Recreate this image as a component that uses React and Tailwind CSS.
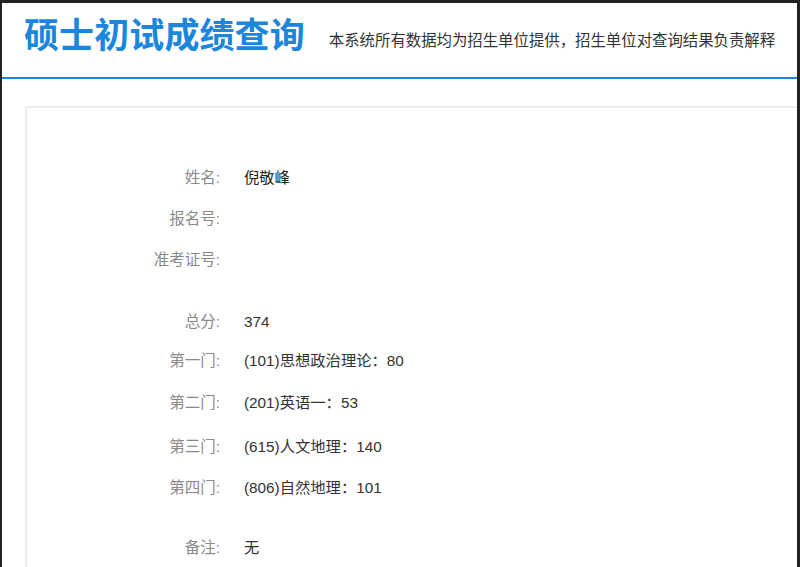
import React from 'react';

const rows = [
  { label: '姓名:', value: '倪敬峰', mt: 'mt-[60px]', strong: true },
  { label: '报名号:', value: '', mt: 'mt-[21px]' },
  { label: '准考证号:', value: '', mt: 'mt-[21px]' },
  { label: '总分:', value: '374', mt: 'mt-[42px]' },
  { label: '第一门:', value: '(101)思想政治理论：80', mt: 'mt-[19px]' },
  { label: '第二门:', value: '(201)英语一：53', mt: 'mt-[22px]' },
  { label: '第三门:', value: '(615)人文地理：140', mt: 'mt-[24px]' },
  { label: '第四门:', value: '(806)自然地理：101', mt: 'mt-[21px]' },
  { label: '备注:', value: '无', mt: 'mt-[40px]' },
];

const App = () => {
  return (
    <div
      className="w-[800px] h-[567px] bg-[#222] pt-[3px] pl-[2px] pr-[3px] overflow-hidden"
      style={{ fontFamily: '"Liberation Sans", "Noto Sans CJK SC", sans-serif' }}
    >
      <div className="bg-white h-full">
        {/* header */}
        <div className="h-[76px] border-b-2 border-[#1a86dc] flex items-start pl-[22px]">
          <h1 className="mt-[13px] text-[35px] leading-[40px] font-bold text-[#1a86dc] tracking-[0.1px]">
            硕士初试成绩查询
          </h1>
          <p className="mt-[28px] ml-[24px] text-[15.4px] leading-5 text-[#333]">
            本系统所有数据均为招生单位提供，招生单位对查询结果负责解释
          </p>
        </div>

        {/* result card */}
        <div className="ml-[23px] mt-[27px] border-2 border-r-0 border-b-0 border-[#eeeeee] h-[470px]">
          {rows.map((row) => (
            <div key={row.label} className={`${row.mt} flex items-center h-5`}>
              <div className="w-[195px] pr-[2px] text-right text-[15.5px] leading-5 text-[#8a8a8a]">{row.label}</div>
              <div
                className={`ml-[22px] text-[15.3px] leading-5 ${row.strong ? 'text-[#222]' : 'text-[#333]'}`}
              >
                {row.value}
              </div>
            </div>
          ))}
        </div>
      </div>
    </div>
  );
};

export default App;
